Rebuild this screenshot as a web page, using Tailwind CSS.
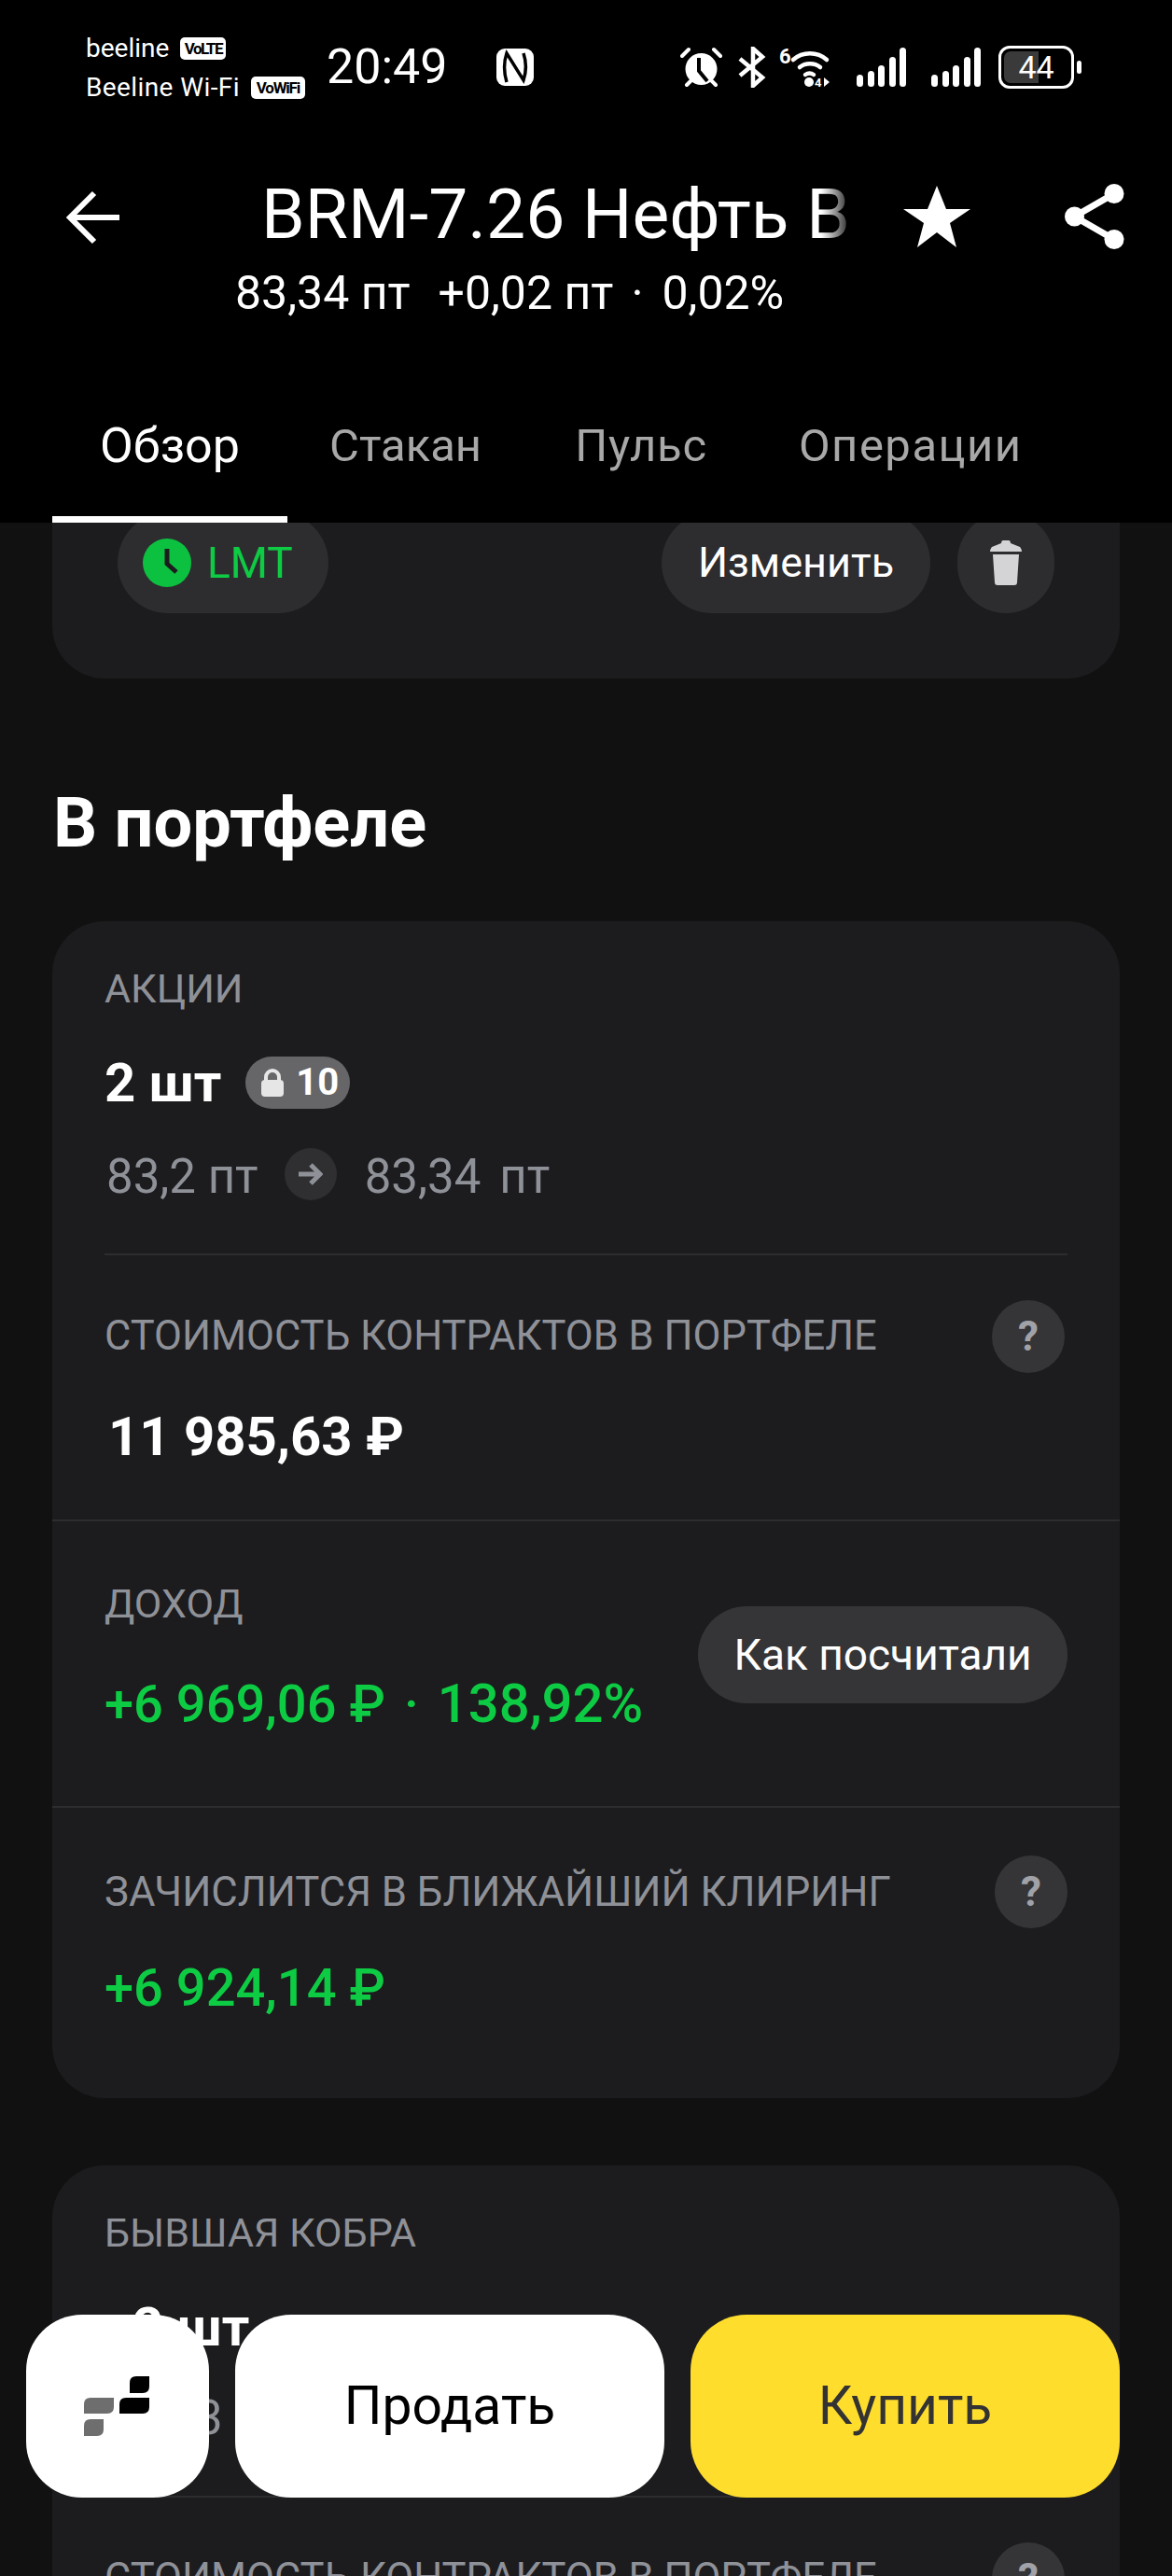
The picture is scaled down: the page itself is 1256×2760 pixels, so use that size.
<!DOCTYPE html>
<html>
    <head>
        <meta charset="UTF-8">
        <meta name="viewport" content="width=device-width, initial-scale=1.0">
        <script src="https://cdn.jsdelivr.net/npm/@tailwindcss/browser@4"></script>
        <title>BRM-7.26</title>
    </head>
    <body class="bg-[#111112]">
        <div class="relative w-[1256px] h-[2760px] overflow-hidden bg-[#111112] font-['Roboto',sans-serif] text-white">

            <!-- шапка -->
            <div class="relative z-10 h-[560px] bg-black">
                <div class="flex items-center h-[144px] pl-[92px] pr-[97px]">
                    <div class="w-[258px] shrink-0 text-[28px] leading-[42px] mt-[2px] whitespace-nowrap">
                        <div class="flex items-center gap-[12px]">beeline <span class="flex justify-center w-[49px] bg-white text-black rounded-[5px] text-[17px] leading-[24px] font-bold tracking-[-1.5px]">VoLTE</span></div>
                        <div class="flex items-center gap-[12px] tracking-[0.4px]">Beeline Wi-Fi <span class="flex justify-center w-[58px] bg-white text-black rounded-[5px] text-[17px] leading-[24px] font-bold tracking-[-1.2px]">VoWiFi</span></div>
                    </div>
                    <div class="text-[52px] leading-none">20:49</div>
                    <svg class="ml-[52px] w-[40px] h-[40px]" viewBox="0 0 40 40"><rect width="40" height="40" rx="9" fill="white"/><path d="M11 36C8 26 8 14 11 5l18 29c3-9 3-20 0-29" fill="none" stroke="black" stroke-width="3.5"/></svg>
                    <div class="ml-auto flex items-center">
                        <svg class="w-[45px] h-[44px]" viewBox="0 0 45 44" fill="white"><circle cx="22.5" cy="24" r="17"/><path d="M20 12v14l9 11" stroke="black" stroke-width="4" fill="none"/><path d="M2 10l7-7M43 10l-7-7M7 41l4-4M38 41l-4-4" stroke="white" stroke-width="4" fill="none" stroke-linecap="round"/></svg>
                        <svg class="ml-[17px] w-[30px] h-[44px]" viewBox="0 0 30 44" fill="none" stroke="white" stroke-width="4.5"><path d="M2 13l24 20-10 9V2l10 9L2 31"/></svg>
                        <svg class="ml-[14px] w-[59px] h-[44px] overflow-visible" viewBox="0 0 59 44" fill="none" stroke="white" stroke-width="4.5" stroke-linecap="round"><path d="M15 14c10-9 26-9 36 0M22 22c6-5 16-5 22 0M28 30c3-2 6-2 9 0"/><circle cx="32" cy="38" r="5" fill="white" stroke="none"/><text x="0" y="18" font-size="22" font-weight="700" fill="white" stroke="none">6</text><text x="38" y="43" font-size="13" font-weight="700" fill="white" stroke="none">4</text><path d="M48 33l6 5-6 5z" fill="white" stroke="none"/></svg>
                        <div class="ml-[24px] flex items-end gap-[4.5px] h-[42px]">
                            <span class="w-[7px] h-[13px] bg-white rounded-full"></span><span class="w-[7px] h-[17px] bg-white rounded-full"></span><span class="w-[7px] h-[23px] bg-white rounded-full"></span><span class="w-[7px] h-[32px] bg-white rounded-full"></span><span class="w-[7px] h-[42px] bg-white rounded-full"></span>
                        </div>
                        <div class="ml-[27px] flex items-end gap-[4.5px] h-[42px]">
                            <span class="w-[7px] h-[13px] bg-white rounded-full"></span><span class="w-[7px] h-[17px] bg-white rounded-full"></span><span class="w-[7px] h-[23px] bg-white rounded-full"></span><span class="w-[7px] h-[32px] bg-white rounded-full"></span><span class="w-[7px] h-[42px] bg-white rounded-full"></span>
                        </div>
                        <div class="ml-[19px] w-[81px] h-[46px] rounded-[12px] border-[3px] border-white relative overflow-hidden flex items-center justify-center text-[34px] leading-none">
                            <span class="absolute left-[3px] top-[3px] bottom-[3px] w-[37px] bg-[#3a3a3a] rounded-l-[7px]"></span>
                            <span class="relative">44</span>
                        </div>
                        <span class="ml-[3px] w-[5px] h-[14px] bg-white rounded-full"></span>
                    </div>
                </div>

                <div class="relative h-[144px]">
                    <svg class="absolute left-[70px] top-[60px] w-[58px] h-[58px]" viewBox="0 0 58 58" fill="none" stroke="white" stroke-width="6"><path d="M58 29H5M31 3L5 29l26 26"/></svg>
                    <div class="absolute left-[280px] top-[45px] w-[636px] overflow-hidden whitespace-nowrap text-[75px] leading-[80px]">BRM-7.26 Нефть Brent
                        <span class="absolute right-0 top-0 w-[36px] h-full bg-gradient-to-r from-transparent to-black"></span>
                    </div>
                    <svg class="absolute left-[968px] top-[54px] w-[72px] h-[68px]" viewBox="0 0 72 68" fill="white"><path d="M36 1l10 25h26L50 41l7 26-21-16-21 16 7-26L0 26h26z"/></svg>
                    <svg class="absolute left-[1141px] top-[53px] w-[64px] h-[70px]" viewBox="0 0 64 70" fill="white"><circle cx="53" cy="10.5" r="10.5"/><circle cx="53" cy="59.5" r="10.5"/><circle cx="10.5" cy="35" r="10.5"/><path d="M53 10.5L10.5 35 53 59.5" fill="none" stroke="white" stroke-width="7"/></svg>
                </div>
                <div class="absolute left-[252px] top-[284px] flex text-[50px] leading-[60px] whitespace-nowrap">
                    <span>83,34 пт</span>
                    <span class="ml-[30px]">+0,02 пт</span>
                    <span class="ml-[19px]">·</span>
                    <span class="ml-[20px]">0,02%</span>
                </div>

                <div class="absolute left-[56px] top-[442px] h-[118px] flex text-[49px] leading-[72px] text-[#a8a8a8]">
                    <div class="w-[252px] h-full border-b-[7px] border-white text-white text-center text-[52px]">Обзор</div>
                    <div class="ml-[45px]">Стакан</div>
                    <div class="ml-[100px] tracking-[0.8px]">Пульс</div>
                    <div class="ml-[98px] tracking-[1.5px]">Операции</div>
                </div>
            </div>

            <!-- карточка заявки, прокручена под шапку -->
            <div class="mx-[56px] -mt-[60px] h-[227px] rounded-[56px] bg-[#1c1c1e] px-[70px] pt-[49px]">
                <div class="flex items-center">
                    <div class="flex items-center h-[108px] rounded-full bg-[#2d2d30] pl-[27px] pr-[38px] text-[46px] text-[#0dcc44]">
                        <svg class="w-[52px] h-[52px] mr-[17px]" viewBox="0 0 52 52"><circle cx="26" cy="26" r="26" fill="#0cc13f"/><path d="M26 11v16l10 9" fill="none" stroke="#1c1c1e" stroke-width="5"/></svg>
                        LMT
                    </div>
                    <div class="ml-auto flex items-center justify-center w-[288px] h-[108px] rounded-full bg-[#2d2d30] text-[45px]">Изменить</div>
                    <div class="ml-[29px] flex items-center justify-center w-[104px] h-[108px] rounded-full bg-[#2d2d30]">
                        <svg class="w-[34px] h-[48px]" viewBox="0 0 34 48" fill="#d4d4d6"><path d="M12 3c0-2 1-3 2-3h6c1 0 2 1 2 3l10 4c1 1 2 3 2 5H0c0-2 1-4 2-5zM3 15h28l-2 30c0 2-1 3-3 3H8c-2 0-3-1-3-3z"/></svg>
                    </div>
                </div>
            </div>

            <h2 class="mt-[115px] ml-[57px] text-[74px] leading-[80px] font-bold">В портфеле</h2>

            <!-- портфель -->
            <div class="mx-[56px] mt-[65px] h-[1261px] rounded-[56px] bg-[#1c1c1e]">
                <div class="h-[358px] mx-[56px] border-b-2 border-[#2d2d30] pt-[44px]">
                    <div class="text-[43px] leading-[56px] text-[#8f9198]">АКЦИИ</div>
                    <div class="mt-[37px] flex items-center">
                        <span class="text-[58px] leading-[72px] font-bold">2 шт</span>
                        <span class="ml-[26px] flex items-center h-[56px] rounded-full bg-[#666668] pl-[17px] pr-[12px] text-[40px] font-bold">
                            <svg class="w-[24px] h-[30px] mr-[13px]" viewBox="0 0 24 30"><path d="M5 14V9a7 7 0 0 1 14 0v5" fill="none" stroke="#e6e6e6" stroke-width="4"/><rect y="12" width="24" height="18" rx="4" fill="#e6e6e6"/></svg>
                            10
                        </span>
                    </div>
                    <div class="mt-[31px] ml-[2px] flex items-center text-[51px] leading-[56px] text-[#8f9198]">
                        <span class="pt-[6px]">83,2 пт</span>
                        <span class="ml-[28px] flex items-center justify-center w-[56px] h-[56px] rounded-full bg-[#2f2f31]">
                            <svg class="w-[26px] h-[26px]" viewBox="0 0 26 26" fill="none" stroke="#8f9198" stroke-width="5"><path d="M0 13h22M13 3l10 10-10 10"/></svg>
                        </span>
                        <span class="ml-[30px] pt-[6px]">83,34</span>
                        <span class="ml-[20px] pt-[6px]">пт</span>
                    </div>
                </div>
                <div class="h-[285px] border-b-2 border-[#2d2d30] px-[56px]">
                    <div class="pt-[48px] flex items-center justify-between">
                        <div class="text-[43.5px] leading-[56px] text-[#8f9198]">СТОИМОСТЬ КОНТРАКТОВ В ПОРТФЕЛЕ</div>
                        <span class="mr-[3px] flex items-center justify-center w-[78px] h-[78px] rounded-full bg-[#353537] text-[44px] font-bold text-[#a0a2a8]">?</span>
                    </div>
                    <div class="mt-[32px] ml-[4px] text-[58px] leading-[72px] font-bold">11 985,63 ₽</div>
                </div>
                <div class="h-[307px] border-b-2 border-[#2d2d30] px-[56px] flex items-start justify-between">
                    <div class="pt-[60px]">
                        <div class="text-[43px] leading-[56px] text-[#8f9198]">ДОХОД</div>
                        <div class="mt-[43px] flex items-baseline text-[56px] leading-[72px] font-medium text-[#0dcc44] whitespace-nowrap">
                            <span>+6 969,06 ₽</span>
                            <span class="ml-[20px]">·</span>
                            <span class="ml-[20px] text-[58px]">138,92%</span>
                        </div>
                    </div>
                    <div class="mt-[91px] flex items-center justify-center w-[396px] h-[104px] rounded-full bg-[#353537] text-[46px]">Как посчитали</div>
                </div>
                <div class="px-[56px]">
                    <div class="pt-[51px] flex items-center justify-between">
                        <div class="text-[43.7px] leading-[56px] text-[#8f9198]">ЗАЧИСЛИТСЯ В БЛИЖАЙШИЙ КЛИРИНГ</div>
                        <span class="flex items-center justify-center w-[78px] h-[78px] rounded-full bg-[#353537] text-[44px] font-bold text-[#a0a2a8]">?</span>
                    </div>
                    <div class="mt-[28px] text-[56px] leading-[72px] font-medium text-[#0dcc44]">+6 924,14 ₽</div>
                </div>
            </div>

            <!-- бывшая кобра, уходит за нижний край -->
            <div class="mx-[56px] mt-[72px] h-[600px] rounded-[56px] bg-[#1c1c1e]">
                <div class="h-[356px] mx-[56px] border-b-2 border-[#2d2d30] pt-[44px]">
                    <div class="text-[43px] leading-[56px] text-[#8f9198]">БЫВШАЯ КОБРА</div>
                    <div class="mt-[37px] ml-[30px] text-[58px] leading-[72px] font-bold">2 шт</div>
                    <div class="mt-[34px] ml-[2px] text-[51px] leading-[56px] text-[#8f9198]">83,33 пт</div>
                </div>
                <div class="px-[56px] pt-[48px] flex items-center justify-between">
                    <div class="text-[43.5px] leading-[56px] text-[#8f9198]">СТОИМОСТЬ КОНТРАКТОВ В ПОРТФЕЛЕ</div>
                    <span class="mr-[3px] flex items-center justify-center w-[78px] h-[78px] rounded-full bg-[#353537] text-[44px] font-bold text-[#a0a2a8]">?</span>
                </div>
            </div>

            <!-- плавающие кнопки -->
            <div class="absolute left-[28px] right-[56px] top-[2480px] h-[196px] flex gap-[28px] text-[57px]">
                <div class="flex items-center justify-center w-[196px] rounded-[60px] bg-white">
                    <svg class="w-[72px] h-[64px]" viewBox="0 0 72 64"><path d="M7 23H32V33Q32 40 25 40H0V30Q0 23 7 23zM7 46H21V57Q21 64 14 64H0V53Q0 46 7 46z" fill="#6e6e6e"/><path d="M45 23H70V33Q70 40 63 40H38V30Q38 23 45 23zM56 0H70V11Q70 18 63 18H49V7Q49 0 56 0z" fill="#000"/></svg>
                </div>
                <div class="flex items-center justify-center w-[460px] rounded-[60px] bg-white text-black">Продать</div>
                <div class="flex items-center justify-center w-[460px] rounded-[60px] bg-[#ffdd2d] text-[#333]">Купить</div>
            </div>
        </div>
    </body>
</html>
